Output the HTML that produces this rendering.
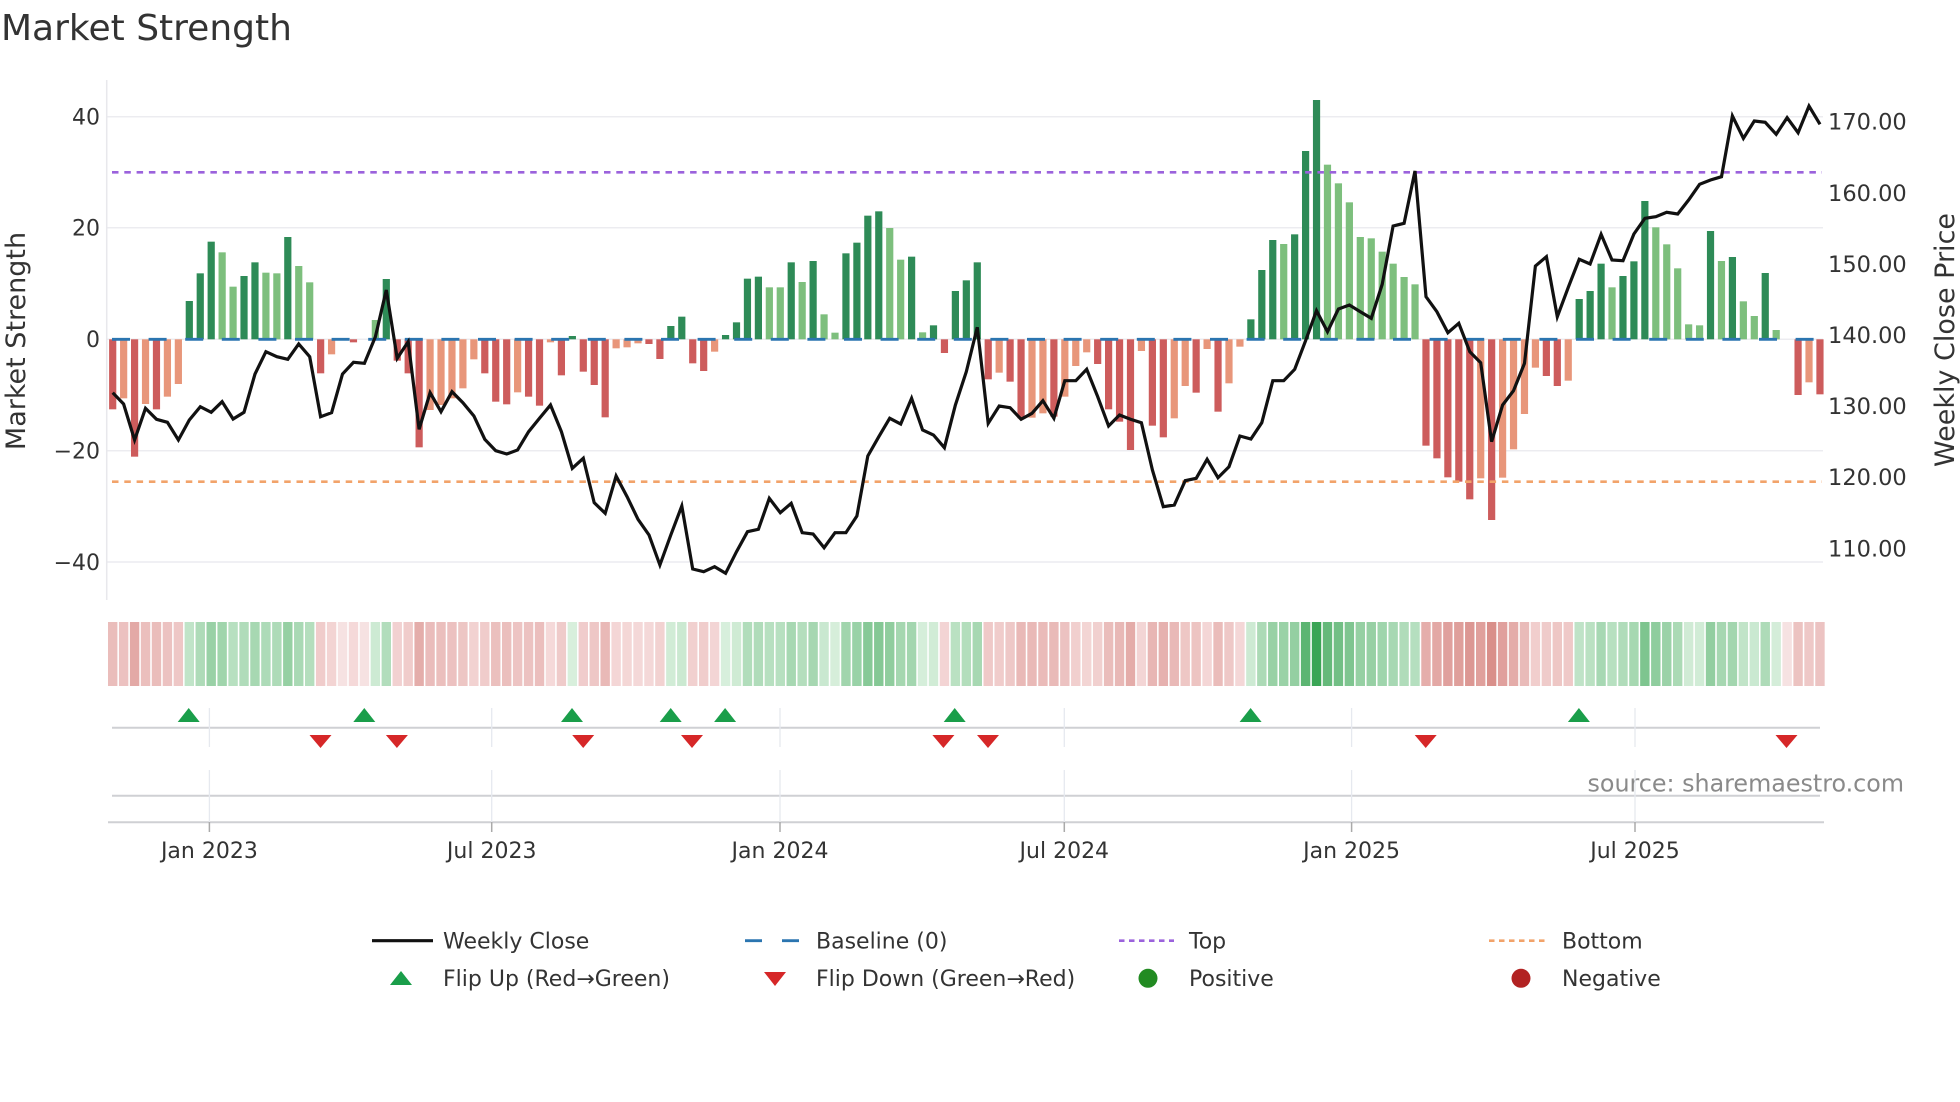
<!DOCTYPE html>
<html><head><meta charset="utf-8"><style>
html,body{margin:0;padding:0;background:#fff;}
svg{display:block;font-family:"DejaVu Sans","Liberation Sans",sans-serif;}
</style></head><body>
<svg id="c" width="1960" height="1102" viewBox="0 0 1960 1102" xmlns="http://www.w3.org/2000/svg">
<rect width="1960" height="1102" fill="#fff"/>
<text x="1" y="40" font-size="36" fill="#333">Market Strength</text>
<g id="grid"></g>
<line x1="106.7" y1="80" x2="106.7" y2="600" stroke="#e8e8ec" stroke-width="1.5"/>
<g id="bars"></g>
<line x1="112" y1="172.3" x2="1822" y2="172.3" stroke="#9b62dc" stroke-width="2.6" stroke-dasharray="6.5 5.8"/>
<line x1="112" y1="481.7" x2="1822" y2="481.7" stroke="#f2a36a" stroke-width="2.6" stroke-dasharray="6.5 5.8"/>
<line x1="112" y1="339.3" x2="1822" y2="339.3" stroke="#2b75b0" stroke-width="2.8" stroke-dasharray="18 18.6"/>
<polyline id="line" fill="none" stroke="#111" stroke-width="3.2" stroke-linejoin="miter"/>
<g font-size="22" fill="#333" text-anchor="end">
<text x="100" y="124.5">40</text><text x="100" y="235.5">20</text><text x="100" y="347">0</text><text x="100" y="458.5">−20</text><text x="100" y="570">−40</text>
</g>
<g font-size="22.5" fill="#333" id="rlab"></g>
<text transform="translate(25,341) rotate(-90)" font-size="27" fill="#333" text-anchor="middle">Market Strength</text>
<text transform="translate(1954,340) rotate(-90)" font-size="27" fill="#333" text-anchor="middle">Weekly Close Price</text>
<g id="heat"></g>
<g id="mk"></g>
<line x1="112" y1="727.7" x2="1820" y2="727.7" stroke="#cfd0d4" stroke-width="2"/>
<line x1="112" y1="795.7" x2="1820" y2="795.7" stroke="#cfd0d4" stroke-width="2"/>
<line x1="108" y1="822.3" x2="1824" y2="822.3" stroke="#cfd0d4" stroke-width="2"/>
<text x="1904" y="791.5" font-size="23.8" fill="#8a8a8a" text-anchor="end">source: sharemaestro.com</text>
<g id="ticks" font-size="22" fill="#333" text-anchor="middle"></g>
<g font-size="22" fill="#333">
<line x1="372" y1="940.7" x2="433" y2="940.7" stroke="#111" stroke-width="3.2"/>
<text x="443" y="948.5">Weekly Close</text>
<line x1="745" y1="940.7" x2="800" y2="940.7" stroke="#2b75b0" stroke-width="2.8" stroke-dasharray="17 20"/>
<text x="816" y="948.5">Baseline (0)</text>
<line x1="1119" y1="940.7" x2="1174" y2="940.7" stroke="#9b62dc" stroke-width="2.6" stroke-dasharray="5.5 4.5"/>
<text x="1189" y="948.5">Top</text>
<line x1="1489" y1="940.7" x2="1545" y2="940.7" stroke="#f2a36a" stroke-width="2.6" stroke-dasharray="5.5 4.5"/>
<text x="1562" y="948.5">Bottom</text>
<polygon points="390,985 412,985 401,971" fill="#1a9e4a"/>
<text x="443" y="986">Flip Up (Red→Green)</text>
<polygon points="764,972 786,972 775,986" fill="#d62728"/>
<text x="816" y="986">Flip Down (Green→Red)</text>
<circle cx="1148" cy="978.3" r="9.5" fill="#228b22"/>
<text x="1189" y="986">Positive</text>
<circle cx="1521" cy="978.3" r="9.5" fill="#b22222"/>
<text x="1562" y="986">Negative</text>
</g>
</svg>
<script>
var NS="http://www.w3.org/2000/svg";
function el(p,t,a,txt){var e=document.createElementNS(NS,t);for(var k in a)e.setAttribute(k,a[k]);if(txt!==undefined)e.textContent=txt;document.getElementById(p).appendChild(e);return e;}
var B="D958 L925 D1100 L942 D958 L920 L882 G633 G550 G455 g487 g590 G558 G517 g548 g550 G441 g528 g577 D850 L793 Z748 D757 Z748 g690 G567 D812 D850 D1072 L960 L945 L925 L895 L808 D850 D935 D943 L907 D920 D947 L757 D856 G738 D845 D885 D982 L775 L772 L760 D762 D807 G708 G680 D820 D843 L785 G735 G697 G566 G560 g592 g592 G517 g576 G513 g673 g728 G490 G458 G377 G364 g414 g509 G500 g727 G706 D789 G603 G571 G517 D868 L848 D875 D985 L983 L970 D980 L920 L828 L787 D822 D958 D995 D1080 L783 D1007 D1042 L985 L888 D908 L777 D965 L880 L770 G688 G540 G450 g462 G433 G183 G30 g224 g280 g337 g441 g445 g485 g521 g561 g583 D1067 D1105 D1162 D1175 D1228 L1165 D1290 L1163 L1078 L972 L833 D858 D888 L872 G627 G603 G521 g592 G558 G514 G333 g412 g463 g535 g703 g706 G423 g513 G501 g634 g678 G549 g720 Z748 D915 L877 D913".split(" ");
var Lz=[908,942,1050,955,988,997,1050,990,950,967,935,987,967,852,785,800,808,762,800,980,968,852,817,820,740,600,805,755,1018,908,965,905,938,978,1048,1082,1092,1080,1025,985,945,1025,1135,1105,1238,1270,1158,1220,1288,1335,1425,1335,1248,1437,1445,1430,1450,1385,1325,1318,1225,1268,1240,1328,1332,1373,1328,1328,1278,1098,1040,985,1002,925,1020,1035,1073,945,845,712,1000,948,953,988,970,932,985,872,872,838,920,1008,975,988,998,1140,1250,1245,1172,1165,1108,1163,1130,1038,1047,998,872,872,838,752,662,725,657,645,665,685,583,408,400,243,620,665,728,700,785,818,1055,945,902,820,528,500,680,592,508,522,433,510,512,432,385,380,367,372,330,283,270,260,78,145,93,97,133,83,128,48,103];
var col={D:"#cd5c5c",L:"#e8967a",G:"#2e8b57",g:"#7dbf7d",Z:"#fff"};
function X(i){return 112.7+10.944*i;}
var Z0=339.3;
[116.7,227.7,450.7,562,339.3].forEach(function(y){el("grid","line",{x1:107,y1:y,x2:1823,y2:y,stroke:"#ececf0","stroke-width":1.5});});
var pts=[];
for(var i=0;i<B.length;i++){
 var t=B[i][0],zy=+B[i].slice(1),y=90+zy/3,x=X(i);
 if(t!=="Z"&&Math.abs(y-Z0)>0.3){el("bars","rect",{x:x-3.6,y:Math.min(y,Z0),width:7.2,height:Math.abs(y-Z0),fill:col[t]});}
 var v=(Z0-y)/5.57, a=Math.min(1,Math.abs(v)/43), c;
 if(v>=0.2){c=[Math.round(218-(218-58)*a),Math.round(240-(240-165)*a),Math.round(222-(222-85)*a)];}
 else if(v<=-0.2){c=[Math.round(245-(245-208)*a),Math.round(218-(218-118)*a),Math.round(218-(218-112)*a)];}
 else c=[246,226,226];
 el("heat","rect",{x:x-4.7,y:622,width:9.4,height:64,fill:"rgb("+c+")"});
 pts.push(x.toFixed(1)+","+(90+Lz[i]/3).toFixed(1));
}
document.getElementById("line").setAttribute("points",pts.join(" "));
for(var k=0;k<7;k++){el("rlab","text",{x:1828,y:(121.7+k*71.1+8).toFixed(1)},(170-10*k).toFixed(2));}
[[209.4,"Jan 2023"],[491.7,"Jul 2023"],[780,"Jan 2024"],[1064.3,"Jul 2024"],[1351.6,"Jan 2025"],[1635,"Jul 2025"]].forEach(function(t){
 el("ticks","line",{x1:t[0],y1:708,x2:t[0],y2:747,stroke:"#e6e9ef","stroke-width":1.3});
 el("ticks","line",{x1:t[0],y1:770,x2:t[0],y2:822,stroke:"#e6e9ef","stroke-width":1.3});
 el("ticks","line",{x1:t[0],y1:822,x2:t[0],y2:832,stroke:"#aaa","stroke-width":1.5});
 el("ticks","text",{x:t[0],y:858},t[1]);
});
[188.7,364.3,572,670.7,725.1,954.7,1250.6,1578.9].forEach(function(x){el("mk","polygon",{points:(x-11)+",722 "+(x+11)+",722 "+x+",708",fill:"#1a9e4a"});});
[320.5,396.9,583.2,692,943.4,988,1425.7,1786.5].forEach(function(x){el("mk","polygon",{points:(x-11)+",735 "+(x+11)+",735 "+x+",748",fill:"#d62728"});});
</script>
</body></html>
